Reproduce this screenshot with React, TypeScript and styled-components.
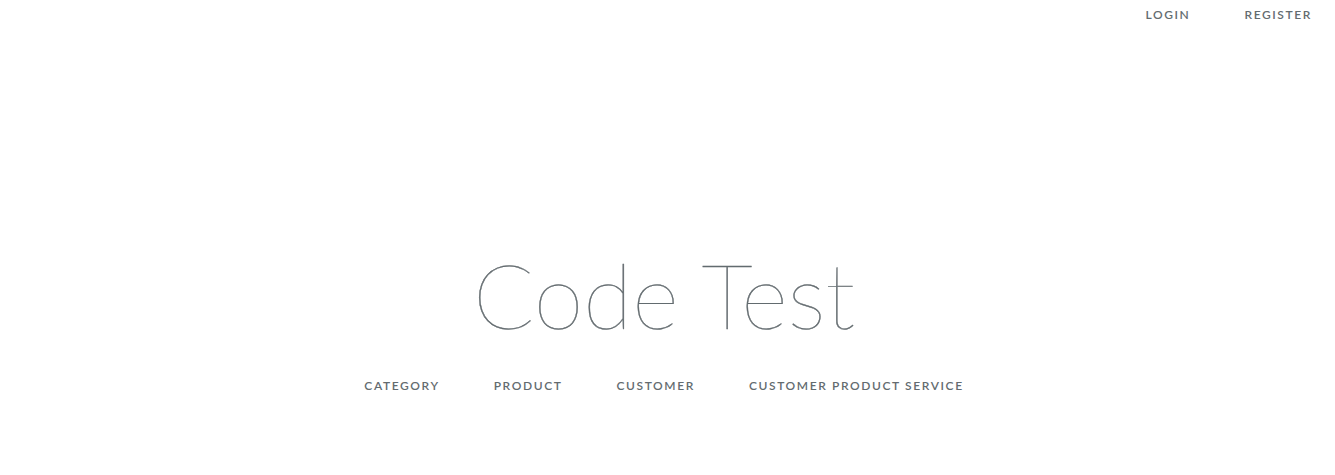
import React from "react";
import styled, { createGlobalStyle } from "styled-components";

const Global = createGlobalStyle`
  html, body { margin: 0; padding: 0; background: #fff; }
  body { font-family: "Lato", "Open Sans", sans-serif; color: #636b6f; }
`;

const Page = styled.div`
  width: 1335px;
  height: 475px;
  display: flex;
  flex-direction: column;
  overflow: hidden;
`;

const TopBar = styled.nav`
  display: flex;
  justify-content: flex-end;
  padding: 8px 0 0 0;
  margin-right: -4px;
  height: 22px;
`;

const Content = styled.main`
  display: flex;
  flex-direction: column;
  align-items: center;
  padding-top: 219px;
  padding-right: 7px;
`;

const Title = styled.h1`
  margin: 0;
  font-family: "Lato", sans-serif;
  font-weight: 100;
  font-size: 90px;
  line-height: 90px;
  color: #636b6f;
  letter-spacing: 0;
  -webkit-text-stroke: 0.4px #636b6f;
`;

const Links = styled.div`
  display: flex;
  margin-top: 40px;
`;

const Link = styled.a`
  color: #636b6f;
  padding: 0 27px;
  font-size: 12px;
  font-weight: 600;
  letter-spacing: 1.6px;
  text-decoration: none;
  text-transform: uppercase;
  line-height: 14px;
`;

export default function App() {
  return (
    <>
      <Global />
      <Page>
        <TopBar>
          <Link href="#">Login</Link>
          <Link href="#">Register</Link>
        </TopBar>
        <Content>
          <Title>Code Test</Title>
          <Links>
            <Link href="#">Category</Link>
            <Link href="#">Product</Link>
            <Link href="#">Customer</Link>
            <Link href="#">Customer Product Service</Link>
          </Links>
        </Content>
      </Page>
    </>
  );
}
